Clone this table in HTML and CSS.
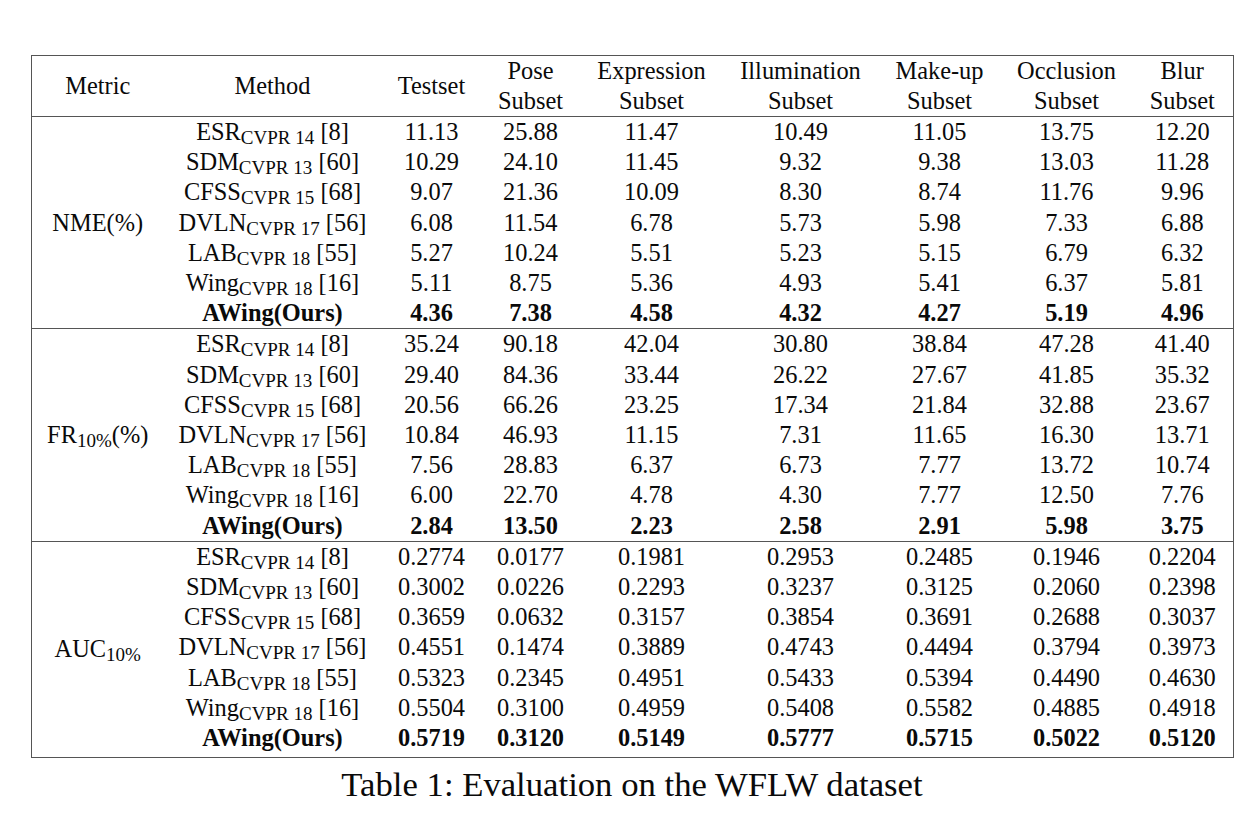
FILE: index.html
```html
<!DOCTYPE html>
<html>
<head>
<meta charset="utf-8">
<link rel="stylesheet" href="styles.css">
</head>
<body>
<div class="page">
<table class="results">
  <colgroup>
    <col class="c-metric"><col class="c-method"><col class="c-test"><col class="c-pose"><col class="c-expr"><col class="c-illum"><col class="c-make"><col class="c-occl"><col class="c-blur">
  </colgroup>
  <thead>
    <tr>
      <th>Metric</th>
      <th>Method</th>
      <th>Testset</th>
      <th>Pose<br>Subset</th>
      <th>Expression<br>Subset</th>
      <th>Illumination<br>Subset</th>
      <th>Make-up<br>Subset</th>
      <th>Occlusion<br>Subset</th>
      <th>Blur<br>Subset</th>
    </tr>
  </thead>
  <tbody>
    <tr><td rowspan="7" class="metric">NME(%)</td><td>ESR<sub>CVPR 14</sub> [8]</td><td>11.13</td><td>25.88</td><td>11.47</td><td>10.49</td><td>11.05</td><td>13.75</td><td>12.20</td></tr>
    <tr><td>SDM<sub>CVPR 13</sub> [60]</td><td>10.29</td><td>24.10</td><td>11.45</td><td>9.32</td><td>9.38</td><td>13.03</td><td>11.28</td></tr>
    <tr><td>CFSS<sub>CVPR 15</sub> [68]</td><td>9.07</td><td>21.36</td><td>10.09</td><td>8.30</td><td>8.74</td><td>11.76</td><td>9.96</td></tr>
    <tr><td>DVLN<sub>CVPR 17</sub> [56]</td><td>6.08</td><td>11.54</td><td>6.78</td><td>5.73</td><td>5.98</td><td>7.33</td><td>6.88</td></tr>
    <tr><td>LAB<sub>CVPR 18</sub> [55]</td><td>5.27</td><td>10.24</td><td>5.51</td><td>5.23</td><td>5.15</td><td>6.79</td><td>6.32</td></tr>
    <tr><td>Wing<sub>CVPR 18</sub> [16]</td><td>5.11</td><td>8.75</td><td>5.36</td><td>4.93</td><td>5.41</td><td>6.37</td><td>5.81</td></tr>
    <tr class="ours"><td>AWing(Ours)</td><td>4.36</td><td>7.38</td><td>4.58</td><td>4.32</td><td>4.27</td><td>5.19</td><td>4.96</td></tr>
  </tbody>
  <tbody>
    <tr><td rowspan="7" class="metric">FR<sub>10%</sub>(%)</td><td>ESR<sub>CVPR 14</sub> [8]</td><td>35.24</td><td>90.18</td><td>42.04</td><td>30.80</td><td>38.84</td><td>47.28</td><td>41.40</td></tr>
    <tr><td>SDM<sub>CVPR 13</sub> [60]</td><td>29.40</td><td>84.36</td><td>33.44</td><td>26.22</td><td>27.67</td><td>41.85</td><td>35.32</td></tr>
    <tr><td>CFSS<sub>CVPR 15</sub> [68]</td><td>20.56</td><td>66.26</td><td>23.25</td><td>17.34</td><td>21.84</td><td>32.88</td><td>23.67</td></tr>
    <tr><td>DVLN<sub>CVPR 17</sub> [56]</td><td>10.84</td><td>46.93</td><td>11.15</td><td>7.31</td><td>11.65</td><td>16.30</td><td>13.71</td></tr>
    <tr><td>LAB<sub>CVPR 18</sub> [55]</td><td>7.56</td><td>28.83</td><td>6.37</td><td>6.73</td><td>7.77</td><td>13.72</td><td>10.74</td></tr>
    <tr><td>Wing<sub>CVPR 18</sub> [16]</td><td>6.00</td><td>22.70</td><td>4.78</td><td>4.30</td><td>7.77</td><td>12.50</td><td>7.76</td></tr>
    <tr class="ours"><td>AWing(Ours)</td><td>2.84</td><td>13.50</td><td>2.23</td><td>2.58</td><td>2.91</td><td>5.98</td><td>3.75</td></tr>
  </tbody>
  <tbody>
    <tr><td rowspan="7" class="metric">AUC<sub>10%</sub></td><td>ESR<sub>CVPR 14</sub> [8]</td><td>0.2774</td><td>0.0177</td><td>0.1981</td><td>0.2953</td><td>0.2485</td><td>0.1946</td><td>0.2204</td></tr>
    <tr><td>SDM<sub>CVPR 13</sub> [60]</td><td>0.3002</td><td>0.0226</td><td>0.2293</td><td>0.3237</td><td>0.3125</td><td>0.2060</td><td>0.2398</td></tr>
    <tr><td>CFSS<sub>CVPR 15</sub> [68]</td><td>0.3659</td><td>0.0632</td><td>0.3157</td><td>0.3854</td><td>0.3691</td><td>0.2688</td><td>0.3037</td></tr>
    <tr><td>DVLN<sub>CVPR 17</sub> [56]</td><td>0.4551</td><td>0.1474</td><td>0.3889</td><td>0.4743</td><td>0.4494</td><td>0.3794</td><td>0.3973</td></tr>
    <tr><td>LAB<sub>CVPR 18</sub> [55]</td><td>0.5323</td><td>0.2345</td><td>0.4951</td><td>0.5433</td><td>0.5394</td><td>0.4490</td><td>0.4630</td></tr>
    <tr><td>Wing<sub>CVPR 18</sub> [16]</td><td>0.5504</td><td>0.3100</td><td>0.4959</td><td>0.5408</td><td>0.5582</td><td>0.4885</td><td>0.4918</td></tr>
    <tr class="ours last"><td>AWing(Ours)</td><td>0.5719</td><td>0.3120</td><td>0.5149</td><td>0.5777</td><td>0.5715</td><td>0.5022</td><td>0.5120</td></tr>
  </tbody>
</table>
<div class="caption">Table 1: Evaluation on the WFLW dataset</div>
</div>
</body>
</html>
```

FILE: styles.css
```css
html, body {
  margin: 0;
  padding: 0;
  background: #ffffff;
}

.page {
  padding: 55px 0 0 31px;
  font-family: "Liberation Serif", "Times New Roman", serif;
  color: #0a0a0a;
}

.results {
  width: 1202px;
  table-layout: fixed;
  border-collapse: collapse;
  border: 1px solid #555;
  font-size: 24.4px;
}

.c-metric { width: 132px; }
.c-method { width: 218px; }
.c-test { width: 100px; }
.c-pose { width: 98px; }
.c-expr { width: 144px; }
.c-illum { width: 154px; }
.c-make { width: 124px; }
.c-occl { width: 130px; }
.c-blur { width: 102px; }

.results th {
  font-weight: normal;
  text-align: center;
  vertical-align: middle;
  padding: 0;
  height: 60px;
  line-height: 30px;
  border-bottom: 1px solid #555;
}

.results tbody {
  border-top: 1px solid #555;
}

.results td {
  text-align: center;
  vertical-align: middle;
  padding: 0;
  height: 30.2px;
  line-height: 30.2px;
  white-space: nowrap;
}

.results td.metric {
  vertical-align: middle;
}

.results sub {
  font-size: 0.78em;
  vertical-align: -4px;
  line-height: 0;
}

.ours td {
  font-weight: bold;
}

.last td {
  padding-bottom: 4px;
}

.caption {
  width: 1202px;
  text-align: center;
  font-size: 34.7px;
  line-height: 40px;
  margin-top: 7px;
}
```
